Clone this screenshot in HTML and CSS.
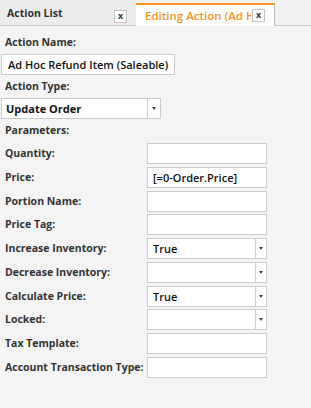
FILE: index.html
```html
<!DOCTYPE html>
<html lang="en">
<head>
<meta charset="UTF-8">
<title>Editing Action</title>
<link rel="stylesheet" href="styles.css">
</head>
<body>

<div class="tabbar">
    <div class="tab">
        <span class="tab-title">Action List</span>
        <span class="tab-close">x</span>
    </div>
    <div class="tab active">
        <span class="tab-title">Editing Action (Ad Hoc Refund Item)</span>
        <span class="tab-close">x</span>
    </div>
</div>

<div class="editor">
    <div class="label">Action Name:</div>
    <div class="textbox wide">Ad Hoc Refund Item (Saleable)</div>

    <div class="label">Action Type:</div>
    <div class="combo type">
        <span class="value">Update Order</span>
        <span class="arrow"></span>
    </div>

    <div class="label">Parameters:</div>

    <div class="params">
        <div class="label">Quantity:</div>
        <div class="textbox"></div>

        <div class="label">Price:</div>
        <div class="textbox">[=0-Order.Price]</div>

        <div class="label">Portion Name:</div>
        <div class="textbox"></div>

        <div class="label">Price Tag:</div>
        <div class="textbox"></div>

        <div class="label">Increase Inventory:</div>
        <div class="combo"><span class="value">True</span><span class="arrow"></span></div>

        <div class="label">Decrease Inventory:</div>
        <div class="combo"><span class="value"></span><span class="arrow"></span></div>

        <div class="label">Calculate Price:</div>
        <div class="combo"><span class="value">True</span><span class="arrow"></span></div>

        <div class="label">Locked:</div>
        <div class="combo"><span class="value"></span><span class="arrow"></span></div>

        <div class="label">Tax Template:</div>
        <div class="textbox"></div>

        <div class="label">Account Transaction Type:</div>
        <div class="textbox"></div>
    </div>
</div>

</body>
</html>
```

FILE: styles.css
```css
* {
    box-sizing: border-box;
    margin: 0;
    padding: 0;
}
body {
    font-family: "Open Sans", "Noto Sans", sans-serif;
    font-size: 10.5px;
    background-color: #f4f4f4;
    color: #333333;
    width: 311px;
    height: 408px;
    overflow: hidden;
}

/* tabs */
.tabbar {
    display: flex;
    height: 26px;
    border-bottom: 1px solid #c8c8c8;
    background-color: #f1f1f1;
}
.tab {
    position: relative;
    display: flex;
    align-items: center;
    width: 136px;
    height: 25px;
    padding: 0 0 0 7px;
    background-color: #ececec;
    font-weight: 700;
    font-size: 10.5px;
}
.tab .tab-close {
    position: absolute;
    left: 114px;
    top: 10px;
}
.tab.active {
    width: 139px;
    height: 23px;
    margin-top: 3px;
    margin-bottom: -1px;
    padding-left: 9px;
    background-color: #ffffff;
    border-top: 2px solid #f7931e;
    border-right: 1px solid #bdbdbd;
    color: #f7931e;
    font-weight: 600;
    font-size: 11.5px;
    white-space: nowrap;
}
.tab.active .tab-title {
    width: 106px;
    overflow: hidden;
}
.tab.active .tab-close {
    left: 116px;
    top: 4px;
}
.tab-close {
    width: 13px;
    height: 13px;
    border: 1px solid #c4c4c4;
    background-color: #ffffff;
    color: #2d3b55;
    font-size: 9px;
    font-weight: 700;
    line-height: 10px;
    text-align: center;
}

/* form */
.editor {
    padding: 0 0 0 1px;
}
.label {
    font-weight: 700;
    color: #333333;
    padding-left: 4px;
    height: 23px;
    line-height: 23px;
    white-space: nowrap;
}
.editor > .label:first-child {
    margin-top: 5px;
}
.textbox, .combo {
    height: 21px;
    background-color: #ffffff;
    border: 1px solid #cccccc;
    line-height: 19px;
    padding-left: 5px;
    color: #111111;
    font-weight: 600;
    font-size: 11px;
    white-space: nowrap;
}
.textbox.wide {
    width: 174px;
    padding-left: 6px;
}
.combo {
    display: flex;
    padding-left: 0;
}
.combo .value {
    flex: 1;
    padding-left: 5px;
}
.combo .arrow {
    position: relative;
    width: 11px;
    border-left: 1px solid #cccccc;
}
.combo .arrow::after {
    content: "";
    position: absolute;
    left: 3px;
    top: 8px;
    border-left: 2px solid transparent;
    border-right: 2px solid transparent;
    border-top: 3px solid #444444;
}
.combo.type {
    width: 160px;
}
.combo.type .value {
    padding-left: 4px;
    font-weight: 700;
}
.combo.type .arrow {
    width: 13px;
}
.combo.type .arrow::after {
    left: 4px;
}

.params {
    display: grid;
    grid-template-columns: 146px 120px;
    row-gap: 2.75px;
    margin-top: 1px;
}
.params .label {
    height: 21px;
    line-height: 21px;
}
```
